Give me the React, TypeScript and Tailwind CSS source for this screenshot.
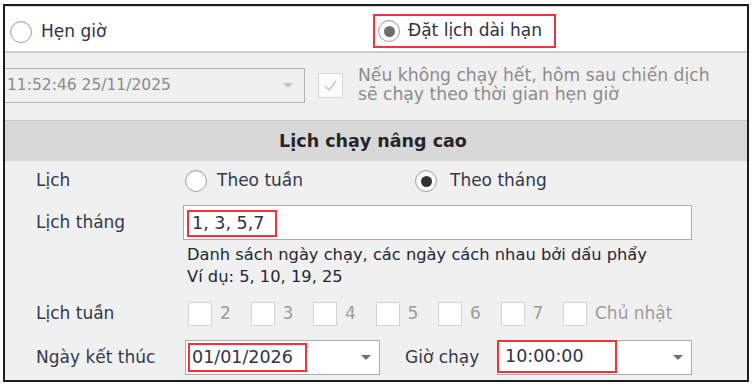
import React from "react";

function Radio({ checked = false, dot = "#3a3a3a" }: { checked?: boolean; dot?: string }) {
  return (
    <div className="w-[22px] h-[22px] rounded-full border-[1.5px] border-[#a2a2a2] bg-white flex items-center justify-center shrink-0 shadow-[inset_0_1px_2px_rgba(0,0,0,0.12)]">
      {checked && <div className="w-[11px] h-[11px] rounded-full" style={{ backgroundColor: dot }} />}
    </div>
  );
}

function Arrow({ color }: { color: string }) {
  return (
    <svg width="10" height="5" viewBox="0 0 10 5" className="shrink-0">
      <polygon points="0,0 10,0 5,5" fill={color} />
    </svg>
  );
}

function DayBox({ label, last = false }: { label: string; last?: boolean }) {
  return (
    <div className={`flex items-center shrink-0 ${last ? "" : "w-[62.5px]"}`}>
      <div className="w-[24px] h-[24px] border border-[#d4d4d4] bg-white shrink-0" />
      <span className="ml-[8px] text-[17px] text-[#9c9c9c]">{label}</span>
    </div>
  );
}

export default function App() {
  return (
    <div className="w-[754px] h-[386px] bg-white pt-[4px] pl-[3px] font-['DejaVu_Sans',sans-serif]">
      <div className="w-[746px] h-[378px] border-2 border-[#1c1c1c] bg-[#f0f0f0] flex flex-col overflow-hidden">
        {/* top row */}
        <div className="h-[47px] shrink-0 bg-white border-t border-[#d9d9d9] border-b-2 border-b-[#cfcfcf] flex items-center pt-[5px]">
          <div className="w-[368px] flex items-center pl-[5px]">
            <Radio />
            <span className="ml-[9px] text-[17px] text-[#2e3245]">Hẹn giờ</span>
          </div>
          <div className="w-[183px] h-[34px] -mt-[1px] border-2 border-[#f2343a] flex items-center pl-[3px]">
            <Radio checked dot="#6e6e6e" />
            <span className="ml-[8px] text-[17px] text-[#2e3245]">Đặt lịch dài hạn</span>
          </div>
        </div>

        {/* second area */}
        <div className="h-[67px] shrink-0 flex items-start pt-[15px]">
          <div className="w-[300px] h-[35px] border-y border-r border-[#b2b2b2] flex items-center pl-[2px] pr-[11px]">
            <span className="text-[15.5px] text-[#8a8a8a]">11:52:46 25/11/2025</span>
            <div className="ml-auto">
              <Arrow color="#c4c4c4" />
            </div>
          </div>
          <div className="ml-[13px] mt-[5px] w-[25px] h-[25px] border border-[#d6d6d6] bg-[#fcfcfc] flex items-center justify-center shrink-0">
            <svg width="17" height="17" viewBox="0 0 17 17">
              <polyline points="3,9 7,13 14,4" fill="none" stroke="#c6c6c6" strokeWidth="1.4" />
            </svg>
          </div>
          <div className="ml-[15px] -mt-[2px] text-[17.2px] leading-[19px] text-[#8c8c8c]">
            <div>Nếu không chạy hết, hôm sau chiến dịch</div>
            <div>sẽ chạy theo thời gian hẹn giờ</div>
          </div>
        </div>

        {/* header band */}
        <div className="h-[41px] shrink-0 bg-[#d8d8d8] border-t border-[#c9c9c9] flex items-center justify-center">
          <span className="text-[17.5px] font-bold text-[#262626] -ml-[6px]">Lịch chạy nâng cao</span>
        </div>

        {/* main */}
        <div className="flex flex-col pl-[31px] text-[17px] text-[#34384a]">
          <div className="h-[40px] flex items-center">
            <div className="w-[149px] shrink-0">Lịch</div>
            <div className="w-[230px] flex items-center">
              <Radio />
              <span className="ml-[10px]">Theo tuần</span>
            </div>
            <div className="flex items-center">
              <Radio checked dot="#333333" />
              <span className="ml-[13px]">Theo tháng</span>
            </div>
          </div>

          <div className="mt-[4px] h-[35px] flex items-center">
            <div className="w-[147px] shrink-0">Lịch tháng</div>
            <div className="w-[509px] h-[35px] border border-[#acacac] bg-white pt-[4px] pb-[2px] pl-[3px] flex">
              <div className="w-[90px] h-full border-2 border-[#f2343a] flex items-center pl-[3px]">
                <span className="text-[17.5px] text-[#2f3345]">1, 3, 5,7</span>
              </div>
            </div>
          </div>

          <div className="pl-[151px] pt-[4px] text-[16.3px] leading-[22px] text-[#232736]">
            <div>Danh sách ngày chạy, các ngày cách nhau bởi dấu phẩy</div>
            <div>Ví dụ: 5, 10, 19, 25</div>
          </div>

          <div className="mt-[11px] h-[30px] flex items-center">
            <div className="w-[152px] shrink-0">Lịch tuần</div>
            <DayBox label="2" />
            <DayBox label="3" />
            <DayBox label="4" />
            <DayBox label="5" />
            <DayBox label="6" />
            <DayBox label="7" />
            <DayBox label="Chủ nhật" last />
          </div>

          <div className="mt-[11px] h-[35px] flex items-center">
            <div className="w-[149px] shrink-0">Ngày kết thúc</div>
            <div className="w-[195px] h-[35px] border border-[#acacac] bg-white flex items-center pl-[2px] pr-[8px] py-[2px]">
              <div className="w-[119px] h-full border-2 border-[#f2343a] flex items-center pl-[2px]">
                <span className="text-[17.5px] text-[#2f3345]">01/01/2026</span>
              </div>
              <div className="ml-auto">
                <Arrow color="#6f6f6f" />
              </div>
            </div>
            <div className="ml-[25px] w-[92px] shrink-0">Giờ chạy</div>
            <div className="w-[195px] h-[35px] border border-[#acacac] bg-white flex items-start pr-[8px]">
              <div className="-ml-px -mt-px w-[120px] h-[33px] border-2 border-[#f2343a] flex items-center pl-[6px] shrink-0">
                <span className="text-[17.5px] text-[#2f3345]">10:00:00</span>
              </div>
              <div className="ml-auto self-center">
                <Arrow color="#6f6f6f" />
              </div>
            </div>
          </div>
        </div>
      </div>
    </div>
  );
}
